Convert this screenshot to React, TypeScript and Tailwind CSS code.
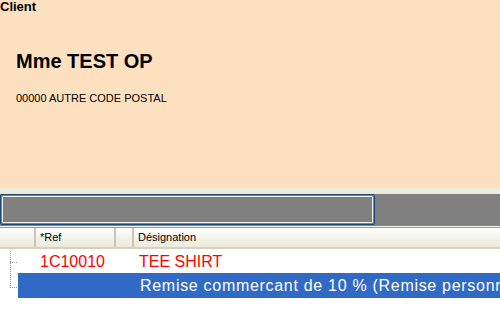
export default function App() {
  return (
    <div className="w-[500px] h-[325px] bg-white overflow-hidden" style={{ fontFamily: '"Liberation Sans", Arial, sans-serif' }}>
      {/* Fiche client */}
      <div className="h-[188px] bg-[#fde0c0] relative">
        <div className="text-[13px] font-bold leading-[14px] text-black">Client</div>
        <div className="pl-[16px] pt-[35px] text-[20px] font-bold leading-[24px] text-black">Mme TEST OP</div>
        <div className="pl-[16px] pt-[19px] text-[11px] leading-[13px] text-black">00000 AUTRE CODE POSTAL</div>
      </div>
      <div className="h-[6px] bg-[#ece9d8]" />

      {/* Barre de saisie */}
      <div className="h-[32px] bg-[#808080] flex">
        <div className="w-[375px] h-[31px] border border-[#1c4a7a] rounded-[2px] p-[1px] bg-[#808080]">
          <div className="w-full h-full border border-[#f4f4f4] rounded-[1px] bg-[#808080]" />
        </div>
      </div>
      <div className="h-[1px] bg-[#f6f6f6]" />
      <div className="h-[1px] bg-[#7f9db9]" />

      {/* En-tete grille */}
      <div className="h-[21px] flex bg-gradient-to-b from-[#fefefe] to-[#ebeadb] border-b-2 border-[#d6d2c2] text-[11px] text-black">
        <div className="w-[36px] border-r-2 border-[#cbc7b8]" />
        <div className="w-[80px] border-r-2 border-[#cbc7b8] pl-[4px] leading-[19px]">*Ref</div>
        <div className="w-[18px] border-r-2 border-[#cbc7b8]" />
        <div className="flex-1 pl-[4px] leading-[19px]">Désignation</div>
      </div>

      {/* Lignes */}
      <div className="relative">
        <div className="absolute left-[10px] top-[2px] h-[37px] border-l border-dotted border-[#a0a0a0]" />
        <div className="absolute left-[10px] top-[13px] w-[7px] border-t border-dotted border-[#a0a0a0]" />
        <div className="absolute left-[10px] top-[38px] w-[7px] border-t border-dotted border-[#a0a0a0]" />
        <div className="h-[24px] flex items-center text-[16px] text-[#ff0000] pt-[1px]">
          <span className="w-[139px] pl-[40px]">1C10010</span>
          <span>TEE SHIRT</span>
        </div>
        <div className="ml-[18px] h-[25px] bg-[#316ac5] text-white text-[16px] leading-[25px] pl-[122px] tracking-[0.7px] whitespace-nowrap overflow-hidden">
          Remise commercant de 10 % (Remise personnalisée)
        </div>
      </div>
    </div>
  )
}
